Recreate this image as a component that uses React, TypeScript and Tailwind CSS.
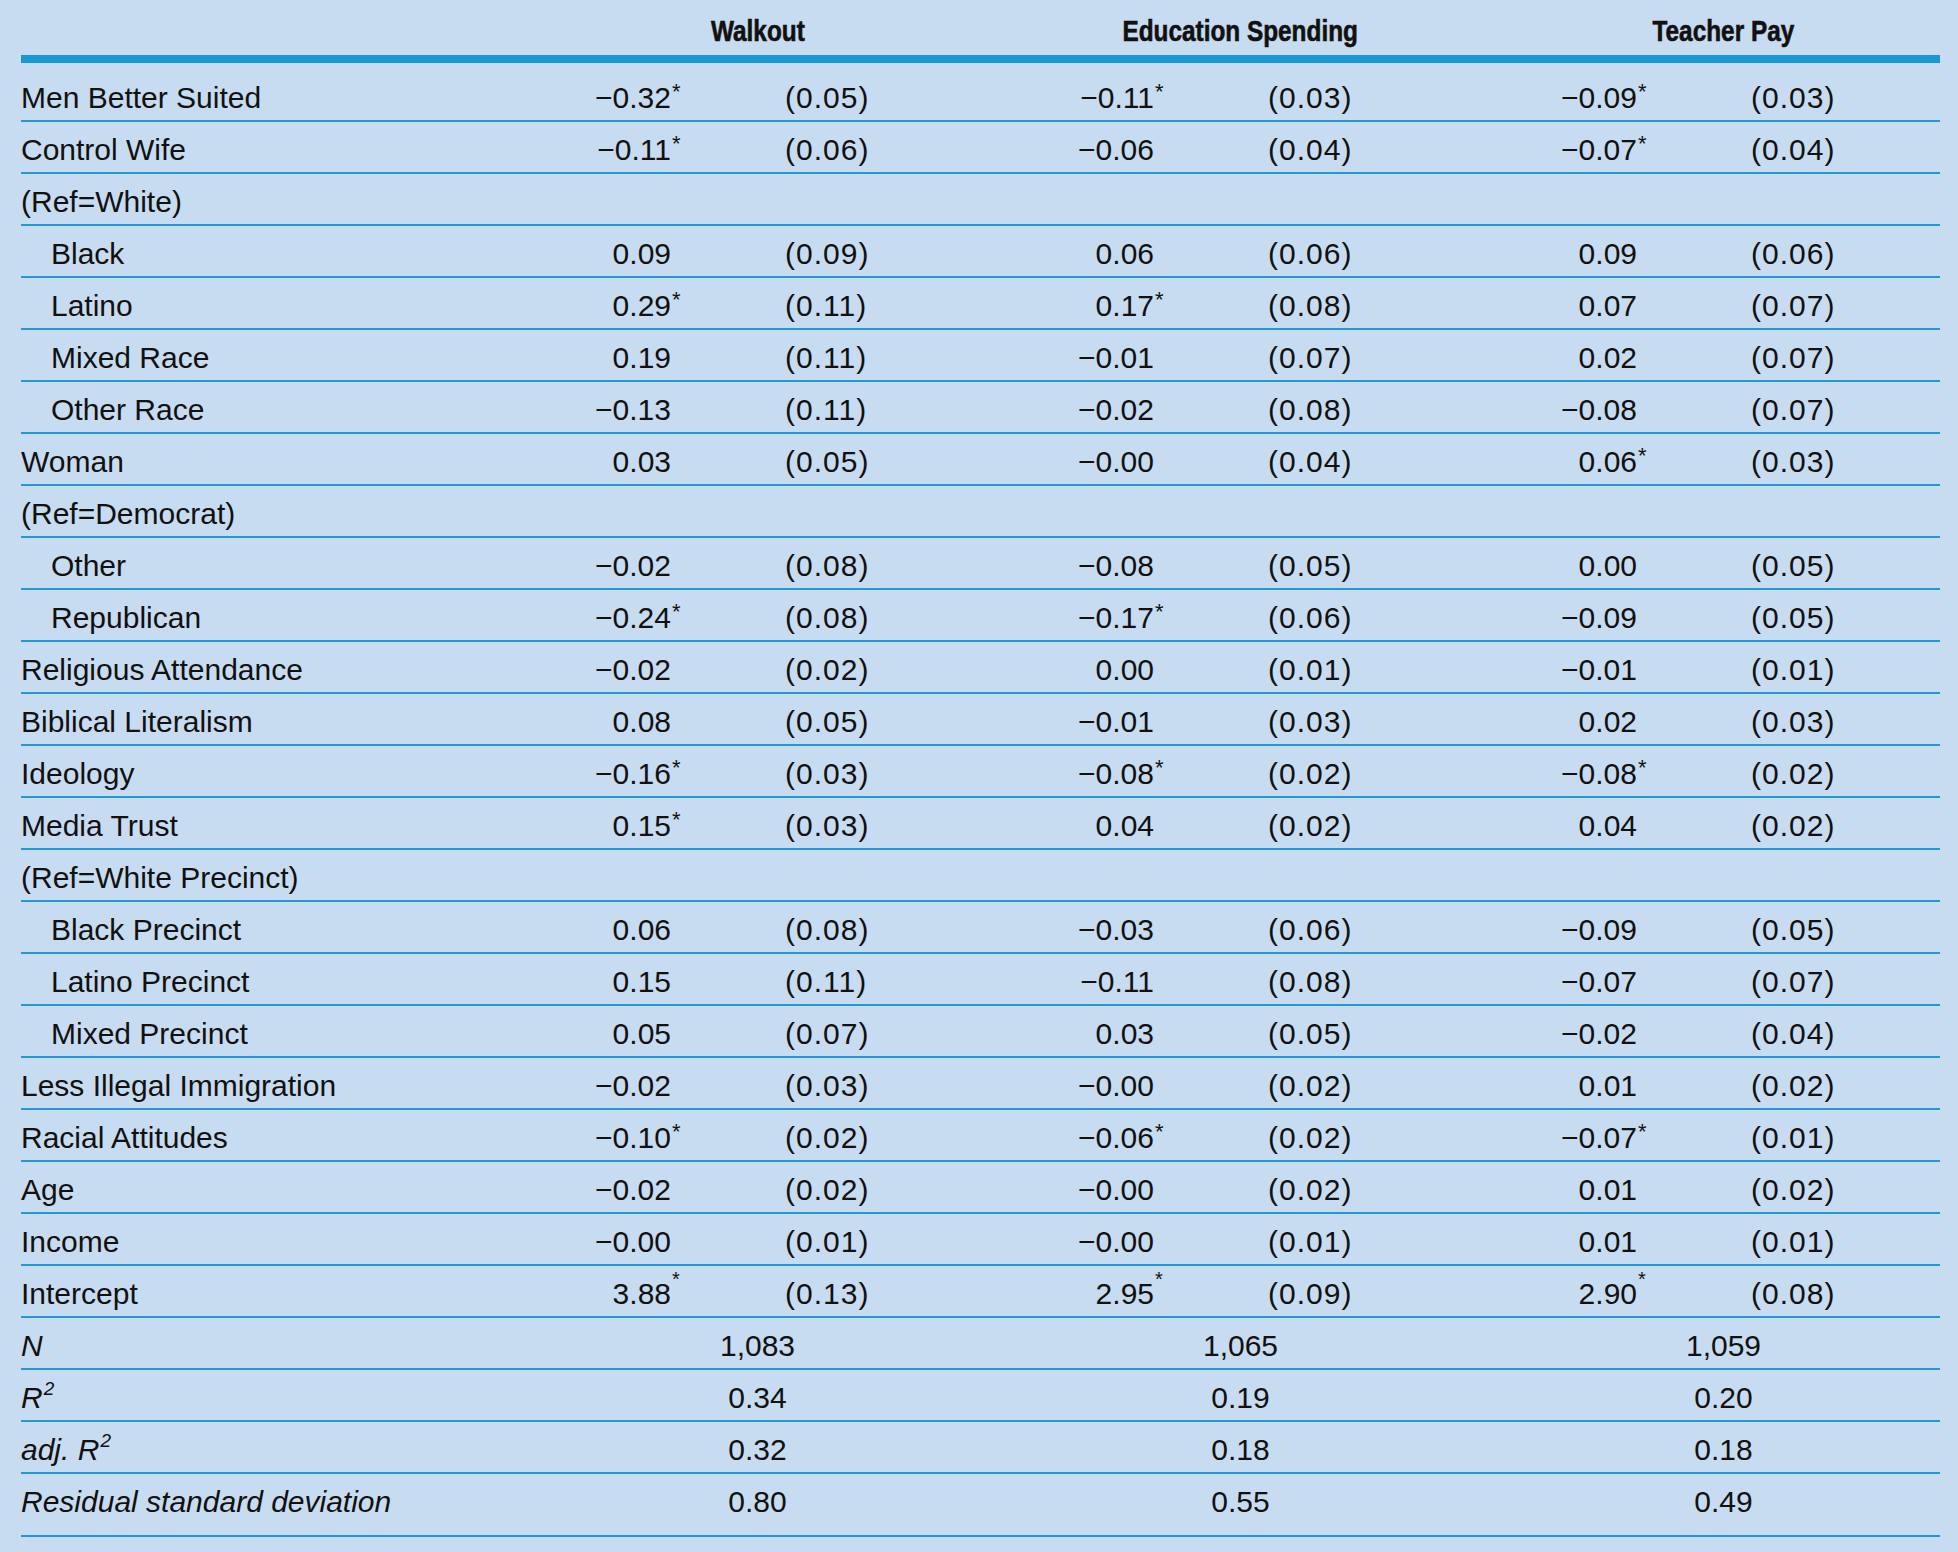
import React from "react";

type Cell = [string, 0 | 1 | 2, string];
type Row = { label: string; indent?: boolean; vals?: Cell[] };

const rows: Row[] = [
  { label: "Men Better Suited", vals: [["−0.32", 1, "(0.05)"], ["−0.11", 1, "(0.03)"], ["−0.09", 1, "(0.03)"]] },
  { label: "Control Wife", vals: [["−0.11", 1, "(0.06)"], ["−0.06", 0, "(0.04)"], ["−0.07", 1, "(0.04)"]] },
  { label: "(Ref=White)" },
  { label: "Black", indent: true, vals: [["0.09", 0, "(0.09)"], ["0.06", 0, "(0.06)"], ["0.09", 0, "(0.06)"]] },
  { label: "Latino", indent: true, vals: [["0.29", 1, "(0.11)"], ["0.17", 1, "(0.08)"], ["0.07", 0, "(0.07)"]] },
  { label: "Mixed Race", indent: true, vals: [["0.19", 0, "(0.11)"], ["−0.01", 0, "(0.07)"], ["0.02", 0, "(0.07)"]] },
  { label: "Other Race", indent: true, vals: [["−0.13", 0, "(0.11)"], ["−0.02", 0, "(0.08)"], ["−0.08", 0, "(0.07)"]] },
  { label: "Woman", vals: [["0.03", 0, "(0.05)"], ["−0.00", 0, "(0.04)"], ["0.06", 1, "(0.03)"]] },
  { label: "(Ref=Democrat)" },
  { label: "Other", indent: true, vals: [["−0.02", 0, "(0.08)"], ["−0.08", 0, "(0.05)"], ["0.00", 0, "(0.05)"]] },
  { label: "Republican", indent: true, vals: [["−0.24", 1, "(0.08)"], ["−0.17", 1, "(0.06)"], ["−0.09", 0, "(0.05)"]] },
  { label: "Religious Attendance", vals: [["−0.02", 0, "(0.02)"], ["0.00", 0, "(0.01)"], ["−0.01", 0, "(0.01)"]] },
  { label: "Biblical Literalism", vals: [["0.08", 0, "(0.05)"], ["−0.01", 0, "(0.03)"], ["0.02", 0, "(0.03)"]] },
  { label: "Ideology", vals: [["−0.16", 1, "(0.03)"], ["−0.08", 1, "(0.02)"], ["−0.08", 1, "(0.02)"]] },
  { label: "Media Trust", vals: [["0.15", 1, "(0.03)"], ["0.04", 0, "(0.02)"], ["0.04", 0, "(0.02)"]] },
  { label: "(Ref=White Precinct)" },
  { label: "Black Precinct", indent: true, vals: [["0.06", 0, "(0.08)"], ["−0.03", 0, "(0.06)"], ["−0.09", 0, "(0.05)"]] },
  { label: "Latino Precinct", indent: true, vals: [["0.15", 0, "(0.11)"], ["−0.11", 0, "(0.08)"], ["−0.07", 0, "(0.07)"]] },
  { label: "Mixed Precinct", indent: true, vals: [["0.05", 0, "(0.07)"], ["0.03", 0, "(0.05)"], ["−0.02", 0, "(0.04)"]] },
  { label: "Less Illegal Immigration", vals: [["−0.02", 0, "(0.03)"], ["−0.00", 0, "(0.02)"], ["0.01", 0, "(0.02)"]] },
  { label: "Racial Attitudes", vals: [["−0.10", 1, "(0.02)"], ["−0.06", 1, "(0.02)"], ["−0.07", 1, "(0.01)"]] },
  { label: "Age", vals: [["−0.02", 0, "(0.02)"], ["−0.00", 0, "(0.02)"], ["0.01", 0, "(0.02)"]] },
  { label: "Income", vals: [["−0.00", 0, "(0.01)"], ["−0.00", 0, "(0.01)"], ["0.01", 0, "(0.01)"]] },
  { label: "Intercept", vals: [["3.88", 2, "(0.13)"], ["2.95", 2, "(0.09)"], ["2.90", 2, "(0.08)"]] },
];

const Sq = () => (
  <span className="relative top-[-13px] ml-[1px] text-[19px] leading-none">2</span>
);

const stats: { label: React.ReactNode; vals: string[] }[] = [
  { label: "N", vals: ["1,083", "1,065", "1,059"] },
  {
    label: (
      <>
        R<Sq />
      </>
    ),
    vals: ["0.34", "0.19", "0.20"],
  },
  {
    label: (
      <>
        adj. R<Sq />
      </>
    ),
    vals: ["0.32", "0.18", "0.18"],
  },
  { label: "Residual standard deviation", vals: ["0.80", "0.55", "0.49"] },
];

const heads = ["Walkout", "Education Spending", "Teacher Pay"];

function Coef({ c }: { c: Cell }) {
  return (
    <div className="flex w-[483px] shrink-0 items-center">
      <div className="w-[155px] shrink-0 text-right">
        <span className="relative">
          {c[0]}
          {c[1] === 1 && (
            <span className="absolute left-full top-[0px] pl-[1px] text-[22px] leading-none">*</span>
          )}
          {c[1] === 2 && (
            <span className="absolute left-full top-[-8px] pl-[1px] text-[20px] leading-none">*</span>
          )}
        </span>
      </div>
      <div className="ml-[114px] shrink-0 tracking-[1px]">{c[2]}</div>
    </div>
  );
}

export default function App() {
  return (
    <div className="w-[1958px] h-[1552px] overflow-hidden bg-[#c7dcf0] pl-[21px] text-[#111] font-['Liberation_Sans',Arial,sans-serif]">
      <div className="w-[1919px]">
        <div className="flex h-[63px] items-center border-b-[8px] border-[#1899d6] pt-[8px]">
          <div className="w-[495px] shrink-0" />
          {heads.map((h) => (
            <div key={h} className="flex w-[483px] shrink-0 justify-center">
              <span className="inline-block scale-x-[0.84] text-[29px] font-bold leading-none whitespace-nowrap [-webkit-text-stroke:0.6px_#111]">
                {h}
              </span>
            </div>
          ))}
        </div>
        <div className="mt-[7px] text-[30px] leading-none">
          {rows.map((r) => (
            <div
              key={r.label}
              className="flex h-[52px] items-center border-b-2 border-[#2198d8] pt-[5px]"
            >
              <div className={`w-[495px] shrink-0 whitespace-nowrap ${r.indent ? "pl-[30px]" : ""}`}>
                {r.label}
              </div>
              {r.vals && r.vals.map((c, i) => <Coef key={i} c={c} />)}
            </div>
          ))}
          {stats.map((s, idx) => (
            <div
              key={idx}
              className={`flex items-center border-b-2 border-[#2198d8] pt-[5px] ${
                idx === 3 ? "h-[63px] pb-[11px]" : "h-[52px]"
              }`}
            >
              <div className="w-[495px] shrink-0 whitespace-nowrap italic">{s.label}</div>
              {s.vals.map((v, i) => (
                <div key={i} className="w-[483px] shrink-0 text-center">
                  {v}
                </div>
              ))}
            </div>
          ))}
        </div>
      </div>
    </div>
  );
}
